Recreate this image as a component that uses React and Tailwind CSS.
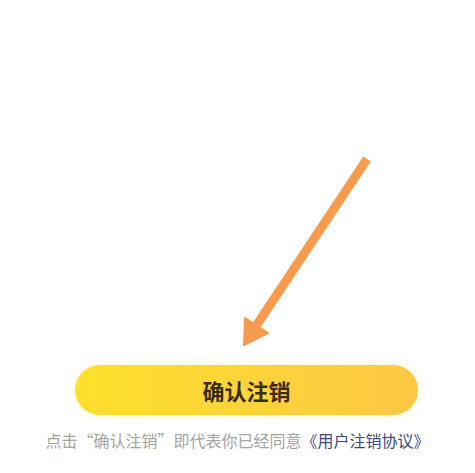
export default function App() {
  return (
    <div
      className="w-[475px] h-[473px] bg-white flex flex-col overflow-hidden"
      style={{ fontFamily: '"Noto Sans CJK SC", "Noto Sans", sans-serif' }}
    >
      <div className="h-[365px] shrink-0">
        <svg width="475" height="365" viewBox="0 0 475 365">
          <line x1="367" y1="159" x2="254" y2="329" stroke="#f89b4f" strokeWidth="9" strokeLinecap="butt" />
          <polygon points="244,345 245,318 268,333" fill="#f89b4f" stroke="#f89b4f" strokeWidth="2" strokeLinejoin="round" />
        </svg>
      </div>
      <div className="ml-[75px] w-[343px] h-[50px] rounded-full bg-gradient-to-r from-[#fde02a] to-[#fcc744] shadow-[0_0_8px_rgba(253,224,42,0.25)] flex items-center justify-center">
        <span className="text-[22px] font-bold text-[#3a2b1c] tracking-[0px]">确认注销</span>
      </div>
      <div className="mt-[13px] text-center text-[16px] leading-[24px] text-[#a3a3a3] tracking-[0px]">
        点击“确认注销”即代表你已经同意<span className="text-[#3d4a78]">《用户注销协议》</span>
      </div>
    </div>
  );
}
